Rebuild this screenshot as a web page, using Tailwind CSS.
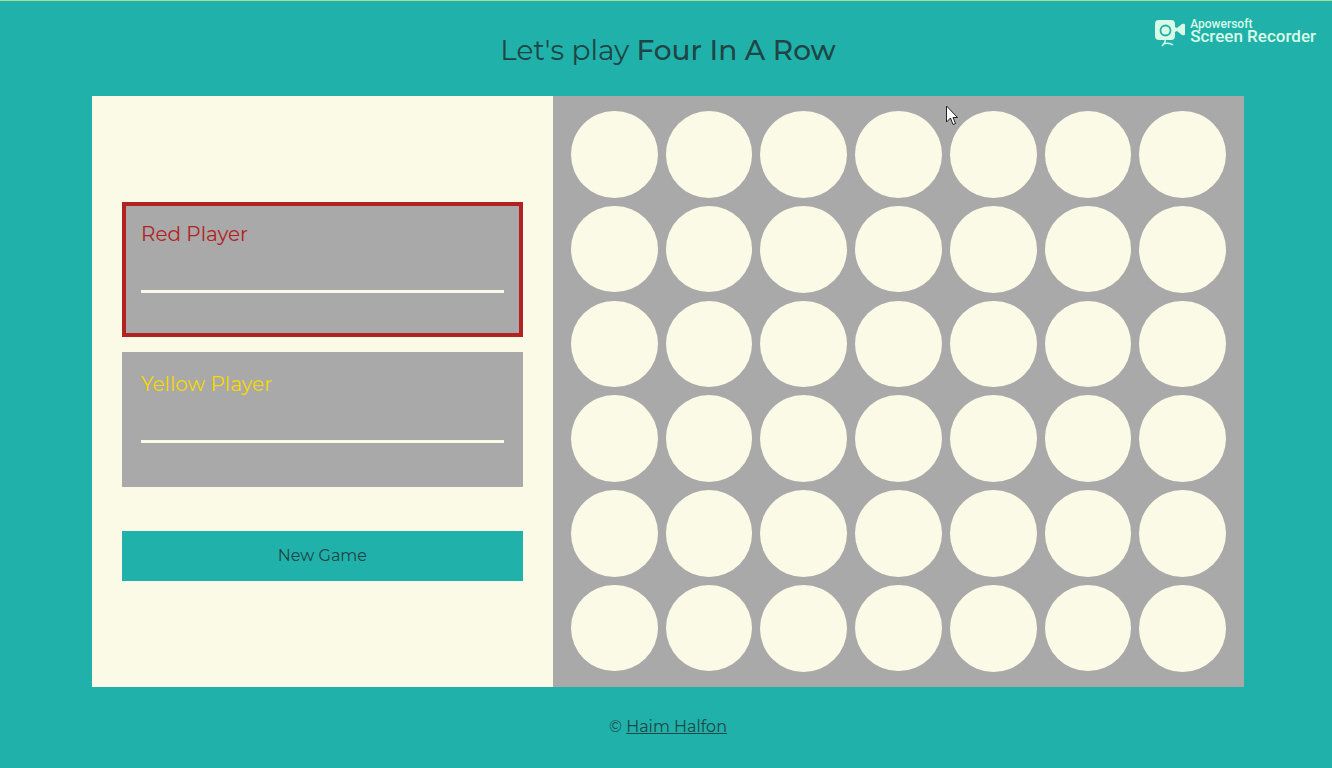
<!DOCTYPE html>
<html lang="en">
<head>
    <meta charset="UTF-8">
    <meta name="viewport" content="width=device-width, initial-scale=1.0">
    <title>Four In A Row</title>
    <script src="https://cdn.jsdelivr.net/npm/@tailwindcss/browser@4"></script>
    <style>
        body {
            font-family: Montserrat, "Open Sans", sans-serif;
        }
    </style>
</head>
<body class="min-h-screen flex flex-col pl-1 bg-[#20b2aa] text-[#1f4545] border-t border-[#a0e090]">
    <!-- Recorder watermark -->
    <div class="absolute top-[18px] right-4 flex items-start gap-1 text-[#d8fbe8]">
        <svg class="w-8 h-8" viewBox="0 0 32 32" fill="none">
            <path d="M5 2h12a4 4 0 0 1 4 4v3l2 1 5-4q3-1 3 1v9q0 2-3 1l-5-4-2 1v4a4 4 0 0 1-4 4H5a4 4 0 0 1-4-4V6a4 4 0 0 1 4-4z" fill="#d8fbe8"/>
            <circle cx="11.500" cy="12.500" r="5" stroke="#20b2aa" stroke-width="1.800"/>
            <path d="M11 22q1 2-3 6M9 26q6-2 10 1" stroke="#d8fbe8" stroke-width="1.500"/>
        </svg>
        <div class="font-['Roboto'] font-medium">
            <div class="text-xs leading-3">Apowersoft</div>
            <div class="text-[17px] leading-3">Screen Recorder</div>
        </div>
    </div>

    <h1 class="pt-7 pb-[25px] text-center text-[28px] leading-[42px]">Let's play <span class="font-medium">Four In A Row</span></h1>

    <main class="flex mx-[88px]">
        <!-- Players -->
        <section class="w-2/5 flex flex-col justify-center px-[30px] bg-[#fafae6]">
            <div class="h-[135px] border-4 border-[#b22222] bg-[#a9a9a9] px-[15px] pt-3">
                <label for="red" class="block text-xl leading-8 text-[#b22222]">Red Player</label>
                <input id="red" type="text" class="block w-full h-[43px] border-b-3 border-[#fafae6] outline-none">
            </div>
            <div class="h-[135px] mt-[15px] border-4 border-[#a9a9a9] bg-[#a9a9a9] px-[15px] pt-3">
                <label for="yellow" class="block text-xl leading-8 text-[#f5d800]">Yellow Player</label>
                <input id="yellow" type="text" class="block w-full h-[43px] border-b-3 border-[#fafae6] outline-none">
            </div>
            <button type="button" class="h-[50px] mt-11 bg-[#20b2aa] text-base">New Game</button>
        </section>

        <!-- Board -->
        <section id="board" class="w-3/5 grid grid-cols-7 gap-2 bg-[#a9a9a9] px-[18px] py-[15px]"></section>
    </main>

    <footer class="pt-7 text-center text-base">&copy; <a href="#" class="underline">Haim Halfon</a></footer>

    <!-- Mouse pointer -->
    <svg class="absolute left-[946px] top-[105px] w-3 h-5" viewBox="0 0 12 20">
        <path d="M.5 1v16l4-4 2.500 6.500 2.500-1L7 12.500h4.500z" fill="#fff" stroke="#222"/>
    </svg>

    <script>
        const board = document.getElementById('board');

        // 6 rows of 7 empty slots
        for (let i = 0; i < 42; i++) {
            const slot = document.createElement('div');
            slot.className = 'aspect-square rounded-full bg-[#fafae6]';
            board.appendChild(slot);
        }
    </script>
</body>
</html>
